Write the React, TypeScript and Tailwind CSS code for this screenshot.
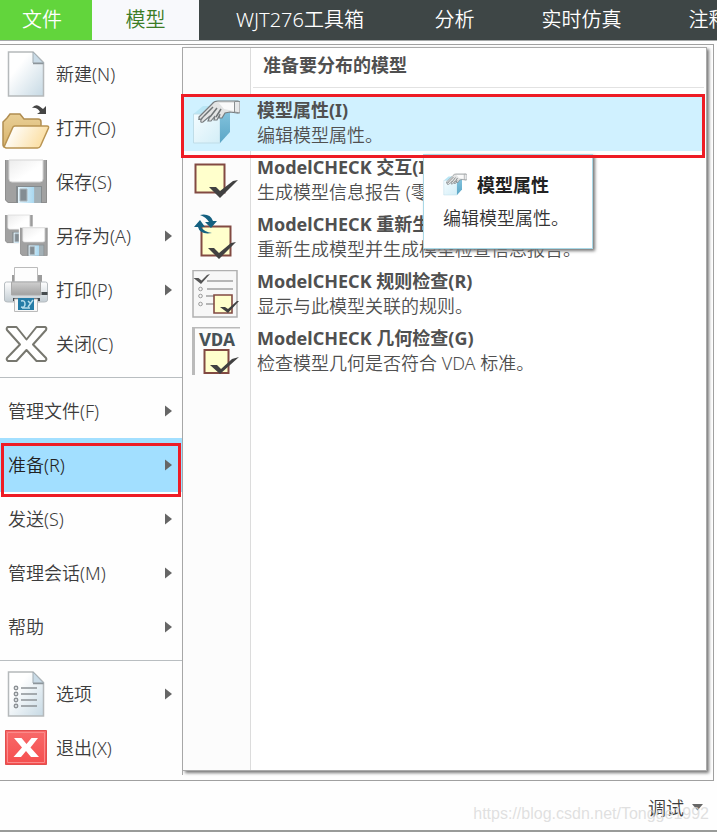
import type { ReactNode } from "react";

const PAGE_FONT = "font-['Noto_Sans','Noto_Sans_CJK_SC',sans-serif]";

function Gradients() {
  return (
    <svg width="0" height="0" className="absolute" aria-hidden="true">
      <defs>
        <linearGradient id="paper" x1="0" y1="0" x2="1" y2="1">
          <stop offset="0.3" stopColor="#ffffff" />
          <stop offset="1" stopColor="#c6d9e4" />
        </linearGradient>
        <linearGradient id="folderBack" x1="0" y1="0" x2="0" y2="1">
          <stop offset="0" stopColor="#e9cf96" />
          <stop offset="1" stopColor="#d9b46c" />
        </linearGradient>
        <linearGradient id="folderFront" x1="0" y1="0" x2="1" y2="0.3">
          <stop offset="0.2" stopColor="#fffdf8" />
          <stop offset="1" stopColor="#fbdfa4" />
        </linearGradient>
        <linearGradient id="label" x1="0" y1="0" x2="1" y2="1">
          <stop offset="0" stopColor="#ececec" />
          <stop offset="0.6" stopColor="#ffffff" />
        </linearGradient>
        <linearGradient id="shutter" x1="0" y1="0" x2="1" y2="0">
          <stop offset="0" stopColor="#e4f4fc" />
          <stop offset="0.7" stopColor="#a9d8f0" />
          <stop offset="0.72" stopColor="#a3b0b6" />
          <stop offset="1" stopColor="#a3b0b6" />
        </linearGradient>
        <linearGradient id="printer" x1="0" y1="0" x2="0" y2="1">
          <stop offset="0" stopColor="#ffffff" />
          <stop offset="1" stopColor="#c3cdd3" />
        </linearGradient>
        <linearGradient id="feeder" x1="0" y1="0" x2="0" y2="1">
          <stop offset="0" stopColor="#cfcfcf" />
          <stop offset="1" stopColor="#a2a2a2" />
        </linearGradient>
        <linearGradient id="exit" x1="0" y1="0" x2="0" y2="1">
          <stop offset="0" stopColor="#f86a6a" />
          <stop offset="1" stopColor="#f54e4e" />
        </linearGradient>
        <linearGradient id="cubeFront" x1="0" y1="0" x2="1" y2="1">
          <stop offset="0" stopColor="#f4fcff" />
          <stop offset="1" stopColor="#d3eef7" />
        </linearGradient>
        <linearGradient id="cubeSide" x1="0" y1="0" x2="0" y2="1">
          <stop offset="0" stopColor="#86c5df" />
          <stop offset="1" stopColor="#5ba6c6" />
        </linearGradient>
      </defs>
    </svg>
  );
}

function Icon({ children, className = "size-12" }: { children: ReactNode; className?: string }) {
  return (
    <svg viewBox="0 0 48 48" className={`shrink-0 ${className}`} fill="none" aria-hidden="true">
      {children}
    </svg>
  );
}

function Page() {
  return (
    <>
      <path d="M6.500 2H31l10.500 10.500V46H6.500Z" fill="url(#paper)" stroke="#b5b9bb" strokeWidth="1.500" />
      <path d="M31 2v11h10.500Z" fill="#c9dbe7" stroke="#a3adb3" strokeWidth="1" />
      <path d="M31 13.500h10.500" stroke="#8c959b" strokeWidth="1.500" />
    </>
  );
}

const NewIcon = () => (
  <Icon>
    <Page />
  </Icon>
);

const OpenIcon = () => (
  <Icon>
    <path
      d="M1 41V18l4-4 3-4h10l4 5h14q3 0 3 3v7l-8 18H4q-3 0-3-2Z"
      fill="url(#folderBack)"
      stroke="#b08d50"
      strokeWidth="1.500"
    />
    <path d="M2 43l9-20q1-1 2-1h32q2 0 1.500 2l-8 18q-1 2-3 2H4Z" fill="url(#folderFront)" stroke="#b99452" strokeWidth="1.500" />
    <path d="M30 4q3-4 7-2l4 3 3-3v8h-9l3-2q-3-5-8-4Z" fill="#454545" />
  </Icon>
);

function Disk() {
  return (
    <>
      <path d="M3 2h42v43H6l-3-3Z" fill="#a1a1a1" />
      <path d="M3.500 2v40l3 2.500H44.500V2" stroke="#8e8e8e" />
      <path d="M7 2h34v19q0 3-3 3H10q-3 0-3-3Z" fill="url(#label)" stroke="#d5d5d5" />
      <path d="M14 28h26v17H14Z" fill="#858b8e" />
      <path d="M16 29h23v16H16Z" fill="url(#shutter)" />
      <path d="M18 31h7v12h-7Z" fill="#838c92" stroke="#aab4ba" />
    </>
  );
}

const SaveIcon = () => (
  <Icon>
    <Disk />
  </Icon>
);

const SaveAsIcon = () => (
  <Icon>
    <g transform="translate(1.200 1.700) scale(0.650)">
      <Disk />
    </g>
    <g transform="translate(16.200 14.500) scale(0.650)">
      <path d="M1 0h46v47H1Z" fill="#ffffff" />
      <Disk />
    </g>
  </Icon>
);

const PrintIcon = () => (
  <Icon>
    <path d="M10 9h4v10h-4zM36 9h4v10h-4z" fill="#9c9c9c" />
    <path d="M12.500 1.500h23V18h-23Z" fill="#fdfdfd" stroke="#bbbbbb" />
    <path d="M2.500 18q0-2 2-2h39q2 0 2 2v16q0 2-3 2H5.500q-3 0-3-2Z" fill="url(#printer)" stroke="#b6bcc0" />
    <path d="M9.500 16h29v13h-29Z" fill="url(#feeder)" stroke="#aaaaaa" />
    <path d="M11 32h27v3H11Z" fill="#444b50" />
    <path d="M39.500 26h6v3h-6Z" fill="#454b4e" />
    <path d="M12.500 33h23v12.500h-23Z" fill="#f7f7f7" stroke="#bbbbbb" />
    <path d="M16 32h16v12H16Z" fill="#257ca7" />
    <path d="M19 35q4-1 4 3t-4 3M26 41l5-7M20 42h8M26 35l2 2" stroke="#b5dcec" strokeWidth="1.500" />
  </Icon>
);

const CloseIcon = () => (
  <Icon>
    <path
      d="M6 7h8.500l10 12.500L34.500 7H43q2 1 1 3L31 24.500 44 38q1 2-1 3h-8.500l-10-11-10 11H6q-2-1-1-3L18 24.500 5 10Q4 8 6 7Z"
      fill="#ffffff"
      stroke="#77776f"
      strokeWidth="2"
      strokeLinejoin="round"
    />
  </Icon>
);

const OptionsIcon = () => (
  <Icon>
    <Page />
    <g stroke="#8d9296" strokeWidth="1.500">
      {[18, 24, 30, 36].map((y) => (
        <g key={y}>
          <circle cx="14" cy={y} r="1.700" />
          <path d={`M19 ${y}h16`} />
        </g>
      ))}
    </g>
  </Icon>
);

const ExitIcon = () => (
  <Icon>
    <path d="M3.500 6.500h41v34h-41Z" fill="url(#exit)" stroke="#e04f4f" />
    <path d="M5.500 8.500h37v30h-37Z" stroke="#fa8b8b" />
    <path d="M12 14h7.500l5 6 5-6H36l-7.500 9.500L37 33h-8l-5-6-5 6h-7.500l8.500-9.500Z" fill="#ffffff" />
  </Icon>
);

const HandCubeIcon = ({ className }: { className?: string }) => (
  <Icon className={className}>
    <path d="M1.500 15 11 7h27l-10 9Z" fill="#b9e6f5" />
    <path d="M1.500 15h26.500v29H1.500Z" fill="url(#cubeFront)" stroke="#bfdde8" />
    <path d="M28 16 38 10v23L28 44Z" fill="url(#cubeSide)" />
    <path
      d="M7 18 20 5q2-3 6-3h20v12l-8-1-5 1-3 5h-3l1-4-3 6h-3l1-4-4 5h-3l2-5-7 6q-3 1-2-2l3-4-3 3q-3 1-2 0Z"
      fill="#e3e4e4"
      stroke="#777c7f"
      strokeWidth="1.200"
    />
    <path d="M12 17l9-9M18 18l7-9M24 18l5-8" stroke="#6f7476" strokeWidth="1.500" />
    <path d="M27 4h15v8l-10-2Z" fill="#fafafa" />
    <path d="M42.500 2.500H48V14l-5.500-1Z" fill="#e6e8e9" stroke="#8a8f91" />
  </Icon>
);

const CheckIcon = () => (
  <Icon>
    <path d="M3.500 8.500h29v28h-29Z" fill="#ffffcc" stroke="#824a42" strokeWidth="2" />
    <path d="M17 31h7l4 4 13-10 5-1-18 18Z" fill="#414141" />
  </Icon>
);

const RegenerateIcon = () => (
  <Icon>
    <path d="M9.500 13.500h29v29h-29Z" fill="#ffffcc" stroke="#824a42" strokeWidth="2" />
    <path d="M16 35h6l5 5 12-10 5-1-17 17Z" fill="#414141" />
    <path d="M8 2q10-2 13 6h4l-6 7-6-6h4q-3-5-9-7ZM20 20Q8 22 6 14H2l6-7 5 7H9q3 5 11 6Z" fill="#146080" />
  </Icon>
);

const RulesIcon = () => (
  <Icon>
    <path d="M1 .500h44V47H1Z" fill="#f7f7f7" stroke="#b0b0b0" strokeWidth="1.500" />
    <path d="M1.500 8h5l3 2.500L15 5l3-1-9 10Z" fill="#555555" />
    <path d="M15 11h26M15 19h26M14 26h8M14 34h8" stroke="#a0a0a0" strokeWidth="1.500" />
    <g stroke="#999999">
      <circle cx="8.500" cy="19" r="1.800" />
      <circle cx="8.500" cy="26" r="1.800" />
      <circle cx="8.500" cy="34" r="1.800" />
    </g>
    <path d="M22 25h18v18H22Z" fill="#ffffcc" stroke="#824a42" strokeWidth="1.600" />
    <path d="M28 37h5l3 2 9-8h2L36 43Z" fill="#3f3f3f" />
  </Icon>
);

const VdaIcon = () => (
  <Icon>
    <path d="M0 0h48v1.500H3V48H0Z" fill="#bababa" />
    <text
      x="25"
      y="19"
      textAnchor="middle"
      fontFamily="Liberation Mono, monospace"
      fontSize="20"
      fontWeight="700"
      fill="#465257"
    >
      VDA
    </text>
    <path d="M12.500 23h24v23h-24Z" fill="#ffffcc" stroke="#824a42" strokeWidth="2" />
    <path d="M18 38h7l4 4 11-10 7-2-19 17Z" fill="#414141" />
  </Icon>
);

type MenuEntry = { text: string; icon?: () => ReactNode; arrow?: boolean; selected?: boolean };

const groups: MenuEntry[][] = [
  [
    { text: "新建(N)", icon: NewIcon },
    { text: "打开(O)", icon: OpenIcon },
    { text: "保存(S)", icon: SaveIcon },
    { text: "另存为(A)", icon: SaveAsIcon, arrow: true },
    { text: "打印(P)", icon: PrintIcon, arrow: true },
    { text: "关闭(C)", icon: CloseIcon },
  ],
  [
    { text: "管理文件(F)", arrow: true },
    { text: "准备(R)", arrow: true, selected: true },
    { text: "发送(S)", arrow: true },
    { text: "管理会话(M)", arrow: true },
    { text: "帮助", arrow: true },
  ],
  [
    { text: "选项", icon: OptionsIcon, arrow: true },
    { text: "退出(X)", icon: ExitIcon },
  ],
];

const commands = [
  { title: "模型属性(I)", detail: "编辑模型属性。", icon: HandCubeIcon, active: true },
  { title: "ModelCHECK 交互(I)", detail: "生成模型信息报告 (零件)。", icon: CheckIcon },
  { title: "ModelCHECK 重新生成(R)", detail: "重新生成模型并生成模型检查信息报告。", icon: RegenerateIcon },
  { title: "ModelCHECK 规则检查(R)", detail: "显示与此模型关联的规则。", icon: RulesIcon },
  { title: "ModelCHECK 几何检查(G)", detail: "检查模型几何是否符合 VDA 标准。", icon: VdaIcon },
];

function MenuRow({ text, icon: Glyph, arrow, selected }: MenuEntry) {
  return (
    <li className="relative">
      <button
        type="button"
        className={`flex h-[54px] w-full items-center gap-1.5 pr-2.5 text-left ${Glyph ? "pl-0.5" : "pl-2"} ${
          selected ? "bg-[#a2dfff] text-[#222]" : ""
        }`}
      >
        {Glyph && <Glyph />}
        <span className="flex-1 whitespace-nowrap">{text}</span>
        {arrow && (
          <svg viewBox="0 0 7 12" className="h-3 w-[7px]" aria-hidden="true">
            <path d="M0 0.500 7 6 0 11.500Z" fill="#666" />
          </svg>
        )}
      </button>
      {selected && (
        <span className="pointer-events-none absolute inset-x-px top-[5px] z-10 h-[54px] border-3 border-[#ee1c25]" />
      )}
    </li>
  );
}

export default function App() {
  return (
    <div className={`overflow-hidden bg-[#fefefe] text-lg font-[350] text-[#3c3c3c] ${PAGE_FONT}`}>
      <Gradients />
      <nav className="flex h-[41px] overflow-hidden border-b border-[#a5a8a8] bg-[#3e4646] text-xl whitespace-nowrap text-white">
        <button type="button" className="w-[92px] shrink-0 bg-[#62d53c] pr-2">文件</button>
        <button type="button" className="w-[107px] shrink-0 bg-[#f8f9fc] text-[#3c7c25]">模型</button>
        <button type="button" className="w-[202px] shrink-0">WJT276工具箱</button>
        <button type="button" className="w-[107px] shrink-0">分析</button>
        <button type="button" className="w-[147px] shrink-0">实时仿真</button>
        <button type="button" className="w-[107px] shrink-0">注释</button>
      </nav>

      <main className="mt-[3px] mr-[3px] flex border-y border-r border-[#a0a0a0] pt-0.5 pb-[5px]">
        <nav className="w-[182px] shrink-0">
          {groups.map((group, index) => (
            <ul key={index} className={index ? "mt-1.5 border-t border-[#b9bec1] pt-1.5" : ""}>
              {group.map((entry) => (
                <MenuRow key={entry.text} {...entry} />
              ))}
            </ul>
          ))}
        </nav>

        <div className="min-w-0 flex-1 border-l border-[#aaa]">
          <section className="mr-1.5 mb-1 grid h-[calc(100%-4px)] grid-cols-[68px_1fr] border-y border-r border-[#aaa] bg-white shadow-[2px_2px_3px_#777]">
            <div className="col-start-1 row-start-1 border-r border-[#dcdcdc] bg-[#fcfcfc]" />
            <div className="col-span-2 col-start-1 row-start-1 pr-0.5 text-[#505050]">
              <h2 className="ml-[70px] h-10 border-b border-[#e2e2e2] pl-2.5 leading-[34px] font-bold">准备要分布的模型</h2>
              <ul className="pt-1.5">
                {commands.map(({ title, detail, icon: Glyph, active }) => (
                  <li key={title} className="relative">
                    <button
                      type="button"
                      className={`flex h-[57px] w-full items-center gap-[17px] pl-[9px] text-left whitespace-nowrap ${
                        active ? "bg-[#d0f1ff]" : ""
                      }`}
                    >
                      <Glyph />
                      <span className="flex flex-col leading-[25px]">
                        <span className="font-bold">{title}</span>
                        <span>{detail}</span>
                      </span>
                    </button>
                    {active && (
                      <>
                        <span className="pointer-events-none absolute top-0 -right-px left-[-2px] z-20 h-16 border-3 border-[#ee1c25]" />
                        <div
                          role="tooltip"
                          className="absolute top-[60px] left-60 z-10 h-[95px] w-[170px] border border-[#a9d8e6] bg-white pt-3.5 pl-[19px] text-[#333] shadow-[2px_2px_3px_#777]"
                        >
                          <div className="flex items-center gap-2.5 leading-8 font-bold text-[#222]">
                            <HandCubeIcon className="size-6" />
                            模型属性
                          </div>
                          <p className="leading-[34px]">编辑模型属性。</p>
                        </div>
                      </>
                    )}
                  </li>
                ))}
              </ul>
            </div>
          </section>
        </div>
      </main>

      <footer className="relative flex h-[51px] items-center justify-end border-b-2 border-[#999b99] pt-1 pr-3.5">
        <button type="button" className="flex items-center gap-2">
          调试
          <svg viewBox="0 0 11 7" className="h-[7px] w-[11px]" aria-hidden="true">
            <path d="M0 0h11L5.500 6.500Z" fill="#666" />
          </svg>
        </button>
        <span className="pointer-events-none absolute right-2 bottom-1 font-['Liberation_Sans',sans-serif] text-base font-normal text-[#d8d8d8]/80">
          https://blog.csdn.net/Tongge1992
        </span>
      </footer>
    </div>
  );
}
